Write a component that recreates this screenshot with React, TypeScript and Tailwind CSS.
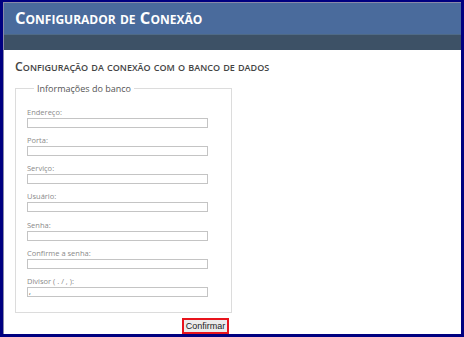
import React from "react";

const fields = [
  { label: "Endereço:", value: "" },
  { label: "Porta:", value: "" },
  { label: "Serviço:", value: "" },
  { label: "Usuário:", value: "" },
  { label: "Senha:", value: "" },
  { label: "Confirme a senha:", value: "" },
  { label: "Divisor ( . / , ):", value: "," },
];

export default function App() {
  return (
    <div className="w-[464px] h-[337px] bg-[#000080] pt-[2px] px-[3px] pb-[3px] font-['Open_Sans',sans-serif]">
      <div className="h-full bg-white border-t border-l border-[#8a8aa8] flex flex-col">
        {/* header */}
        <div className="h-[32px] bg-[#4a6b9c] flex items-center pl-[11px]">
          <h1 className="text-white font-bold text-[16.5px] [font-variant:small-caps] leading-none">
            Configurador de Conexão
          </h1>
        </div>
        <div className="h-[16px] bg-[#3d5166] border-t border-[#4f6a86]" />

        <div className="pl-[11px] pt-[11px]">
          <h2 className="text-[#444] font-semibold text-[12.3px] [font-variant:small-caps] leading-none">
            Configuração da conexão com o banco de dados
          </h2>

          <fieldset className="mt-[11px] w-[217px] border border-[#dcdcdc] pl-[11px] pb-[15px] m-0">
            <legend className="ml-[7px] px-[3px] text-[9px] text-[#555] leading-none">
              Informações do banco
            </legend>
            <div className="flex flex-col gap-[7.2px] mt-[14px]">
              {fields.map((f) => (
                <div key={f.label} className="flex flex-col gap-[1px]">
                  <label className="text-[7.5px] text-[#8a8a8a] leading-[10px]">{f.label}</label>
                  <div className="w-[181px] h-[10px] border border-[#c4c4c4] text-[7px] leading-[7px] pl-[1px] text-[#333]">
                    {f.value}
                  </div>
                </div>
              ))}
            </div>
          </fieldset>

          <div className="w-[214px] flex justify-end mt-[5px]">
            <button className="border-2 border-[#e8141c] bg-[#ececec] w-[47px] h-[16px] text-[9px] text-[#222] leading-none font-['Liberation_Sans',sans-serif]">
              Confirmar
            </button>
          </div>
        </div>
      </div>
    </div>
  );
}
